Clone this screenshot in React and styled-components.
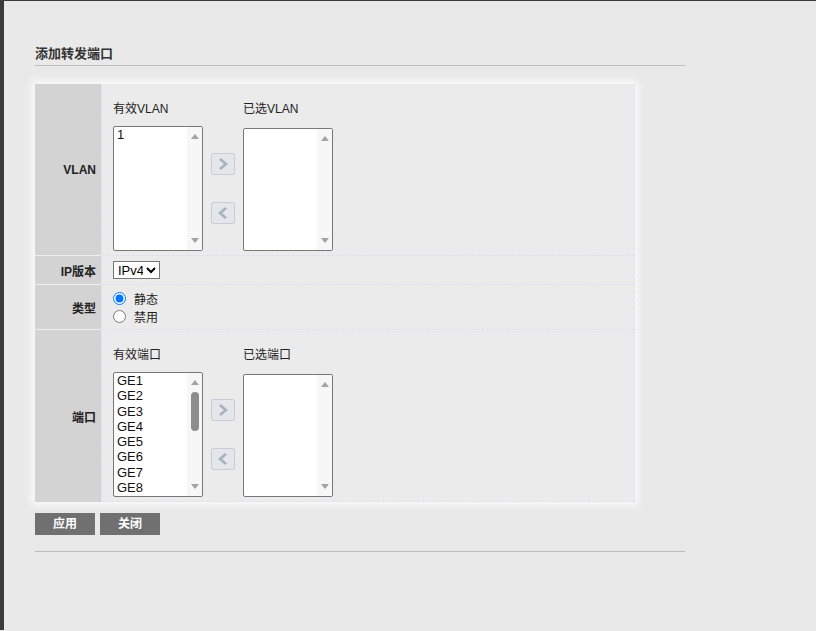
import styled, { createGlobalStyle } from "styled-components";

const GlobalStyle = createGlobalStyle`
  html, body {
    margin: 0;
    padding: 0;
    background: #e9e9e9;
  }
  body {
    font-family: "Liberation Sans", "Noto Sans CJK SC", sans-serif;
    font-size: 12px;
    color: #222;
  }
`;

const Page = styled.div`
  min-height: 630px;
  border-left: 4px solid #3c3c3c;
  border-top: 1px solid #3c3c3c;
  padding: 42px 0 0 31px;
  box-sizing: border-box;
`;

const Panel = styled.div`
  width: 650px;
`;

const Title = styled.h2`
  margin: 0;
  font-size: 13px;
  font-weight: bold;
  color: #333;
  padding-bottom: 3px;
  border-bottom: 1px solid #bdbdbd;
`;

const Table = styled.div`
  margin-top: 18px;
  width: 600px;
  display: grid;
  grid-template-columns: 66px 1fr;
  box-shadow: 0 0 8px 3px rgba(255, 255, 255, 0.85);
  background: #ebebeb;
`;

const Label = styled.div`
  background: #d3d3d3;
  font-weight: bold;
  color: #222;
  display: flex;
  align-items: center;
  justify-content: flex-end;
  padding-right: 5px;
  height: ${(p) => p.$h}px;
  border-bottom: ${(p) => (p.$last ? "none" : "1px solid #eeeeee")};
`;

const Cell = styled.div`
  height: ${(p) => p.$h}px;
  box-sizing: border-box;
  border: 1px dashed #dedff0;
  border-top: none;
  padding: ${(p) => p.$pad || "0 0 0 11px"};
  display: flex;
  flex-direction: ${(p) => (p.$col ? "column" : "row")};
  justify-content: ${(p) => (p.$col ? "center" : "flex-start")};
  align-items: ${(p) => (p.$col ? "flex-start" : "center")};
`;

const Transfer = styled.div`
  display: flex;
  align-items: flex-start;
`;

const ListCol = styled.div`
  display: flex;
  flex-direction: column;
`;

const ListTitle = styled.div`
  font-size: 12px;
  line-height: 14px;
  height: 14px;
  margin-bottom: ${(p) => p.$gap}px;
`;

const List = styled.div`
  width: 90px;
  height: ${(p) => p.$h}px;
  box-sizing: border-box;
  border: 1px solid #777;
  border-radius: 2px;
  background: #fff;
  display: flex;
  overflow: hidden;
`;

const Items = styled.div`
  flex: 1;
  padding: 0 0 0 3px;
  overflow: hidden;
`;

const Item = styled.div`
  font-size: 13px;
  line-height: 15.3px;
  color: #111;
  white-space: nowrap;
`;

const Track = styled.div`
  width: 15px;
  background: #f7f7f7;
  display: flex;
  flex-direction: column;
  align-items: center;
  padding: 7px 0;
  box-sizing: border-box;
`;

const TrackBody = styled.div`
  flex: 1;
  width: 100%;
  display: flex;
  justify-content: center;
`;

const Thumb = styled.div`
  width: 8px;
  height: ${(p) => p.$h}px;
  margin-top: ${(p) => p.$top}px;
  border-radius: 4px;
  background: #8c8c8c;
`;

const Tri = styled.div`
  width: 0;
  height: 0;
  border-left: 4.5px solid transparent;
  border-right: 4.5px solid transparent;
  ${(p) =>
    p.$up
      ? "border-bottom: 5px solid #a3a3a3;"
      : "border-top: 5px solid #a3a3a3;"}
`;

const Arrows = styled.div`
  display: flex;
  flex-direction: column;
  gap: 27px;
  padding: 51px 8px 0 8px;
`;

const ArrowBtn = styled.button`
  width: 24px;
  height: 22px;
  padding: 0;
  border: 1px solid #c9cdd2;
  border-radius: 2px;
  background: #e3e7eb;
  display: flex;
  align-items: center;
  justify-content: center;
  cursor: pointer;
`;

const IpSelect = styled.select`
  width: 47px;
  height: 18px;
  font-family: "Liberation Sans", sans-serif;
  font-size: 13px;
  border: 1px solid #767676;
  border-radius: 0;
  background: #fff;
  padding: 0;
  margin: 0;
`;

const RadioRow = styled.label`
  display: flex;
  align-items: center;
  height: 18px;
  font-size: 12px;

  input {
    margin: 0 8px 0 0;
    width: 13px;
    height: 13px;
  }
`;

const Actions = styled.div`
  display: flex;
  gap: 5px;
  margin-top: 11px;
  padding-bottom: 16px;
  border-bottom: 1px solid #bdbdbd;
`;

const Button = styled.button`
  width: 60px;
  height: 22px;
  border: none;
  background: #707070;
  color: #fff;
  font-family: "Liberation Sans", "Noto Sans CJK SC", sans-serif;
  font-weight: bold;
  font-size: 12px;
  line-height: 22px;
  padding: 0;
  cursor: pointer;
`;

const Chevron = ({ dir }) => (
  <svg width="10" height="12" viewBox="0 0 10 12">
    <path
      d={dir === "right" ? "M2 1 L8 6 L2 11" : "M8 1 L2 6 L8 11"}
      fill="none"
      stroke="#a9b2ba"
      strokeWidth="2.6"
    />
  </svg>
);

const ListBox = ({ h, items = [], thumb }) => (
  <List $h={h}>
    <Items>
      {items.map((i) => (
        <Item key={i}>{i}</Item>
      ))}
    </Items>
    <Track>
      <Tri $up />
      <TrackBody>{thumb && <Thumb $top={thumb.top} $h={thumb.h} />}</TrackBody>
      <Tri />
    </Track>
  </List>
);

const TransferBox = ({ left, right, items, thumb }) => (
  <Transfer>
    <ListCol>
      <ListTitle $gap={10}>{left}</ListTitle>
      <ListBox h={125} items={items} thumb={thumb} />
    </ListCol>
    <Arrows>
      <ArrowBtn>
        <Chevron dir="right" />
      </ArrowBtn>
      <ArrowBtn>
        <Chevron dir="left" />
      </ArrowBtn>
    </Arrows>
    <ListCol>
      <ListTitle $gap={12}>{right}</ListTitle>
      <ListBox h={123} />
    </ListCol>
  </Transfer>
);

const ports = Array.from({ length: 28 }, (_, i) => `GE${i + 1}`);

const App = () => (
  <>
    <GlobalStyle />
    <Page>
      <Panel>
        <Title>添加转发端口</Title>
        <Table>
          <Label $h={171}>VLAN</Label>
          <Cell $h={172} $pad="14px 0 0 11px">
            <TransferBox left="有效VLAN" right="已选VLAN" items={["1"]} />
          </Cell>

          <Label $h={28}>IP版本</Label>
          <Cell $h={29}>
            <IpSelect defaultValue="IPv4">
              <option>IPv4</option>
              <option>IPv6</option>
            </IpSelect>
          </Cell>

          <Label $h={44}>类型</Label>
          <Cell $h={45} $col>
            <RadioRow>
              <input type="radio" name="type" defaultChecked />
              静态
            </RadioRow>
            <RadioRow>
              <input type="radio" name="type" />
              禁用
            </RadioRow>
          </Cell>

          <Label $h={172} $last>端口</Label>
          <Cell $h={172} $pad="14px 0 0 11px">
            <TransferBox
              left="有效端口"
              right="已选端口"
              items={ports}
              thumb={{ top: 7, h: 39 }}
            />
          </Cell>
        </Table>
        <Actions>
          <Button>应用</Button>
          <Button>关闭</Button>
        </Actions>
      </Panel>
    </Page>
  </>
);

export default App;
